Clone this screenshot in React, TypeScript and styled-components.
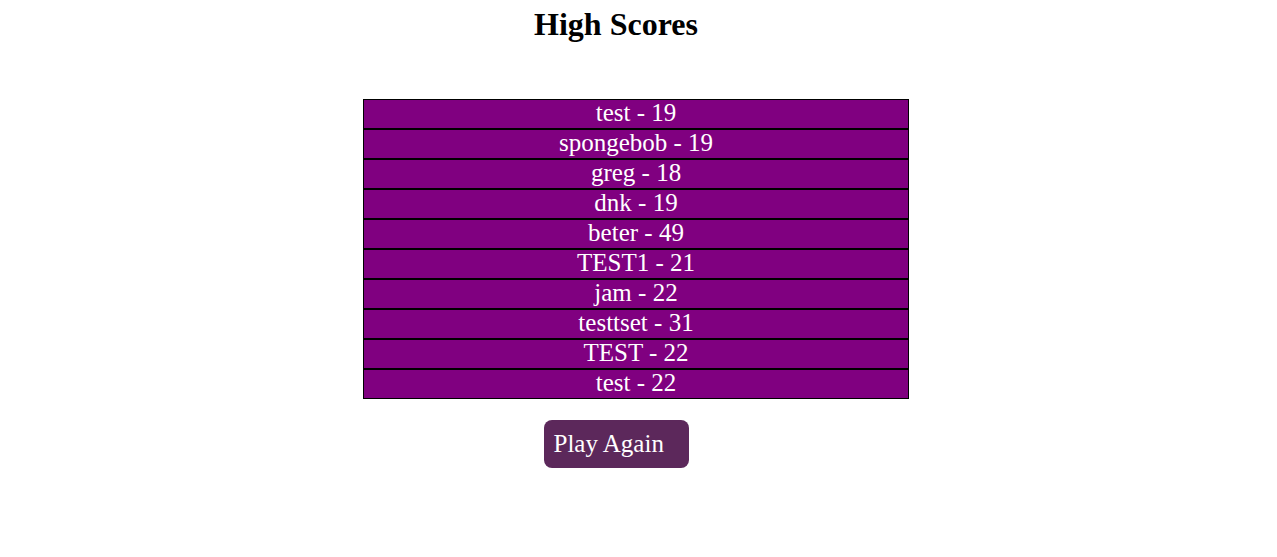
import React from "react";
import styled, { createGlobalStyle } from "styled-components";

const GlobalStyle = createGlobalStyle`
  html, body { margin: 0; padding: 0; background: #ffffff; }
  body {
    font-family: "Liberation Serif", "Times New Roman", serif;
    color: #000000;
  }
`;

const Page = styled.div`
  width: 1216px;
  margin-left: 8px;
  padding-top: 6px;
  display: flex;
  flex-direction: column;
  align-items: center;
`;

const Title = styled.h1`
  margin: 0;
  font-size: 32px;
  line-height: 37px;
  font-weight: bold;
`;

const ScoreList = styled.ul`
  list-style: none;
  margin: 56px 0 0 40px;
  padding: 0;
  width: 546px;
`;

const ScoreRow = styled.li`
  box-sizing: border-box;
  height: 30px;
  border: 1px solid #000000;
  background: #800080;
  color: #ffffff;
  font-size: 25px;
  line-height: 26px;
  text-align: center;
`;

const PlayButton = styled.button`
  box-sizing: border-box;
  margin-top: 21px;
  width: 145px;
  height: 48px;
  padding: 0 0 0 10px;
  border: none;
  border-radius: 8px;
  background: #5c285b;
  color: #ffffff;
  font-family: "Liberation Serif", "Times New Roman", serif;
  font-size: 25px;
  text-align: left;
  cursor: pointer;
`;

const scores = [
  { name: "test", score: 19 },
  { name: "spongebob", score: 19 },
  { name: "greg", score: 18 },
  { name: "dnk", score: 19 },
  { name: "beter", score: 49 },
  { name: "TEST1", score: 21 },
  { name: "jam", score: 22 },
  { name: "testtset", score: 31 },
  { name: "TEST", score: 22 },
  { name: "test", score: 22 },
];

export default function App() {
  return (
    <>
      <GlobalStyle />
      <Page>
        <Title>High Scores</Title>
        <ScoreList>
          {scores.map((s, i) => (
            <ScoreRow key={i}>
              {s.name} - {s.score}
            </ScoreRow>
          ))}
        </ScoreList>
        <PlayButton>Play Again</PlayButton>
      </Page>
    </>
  );
}
